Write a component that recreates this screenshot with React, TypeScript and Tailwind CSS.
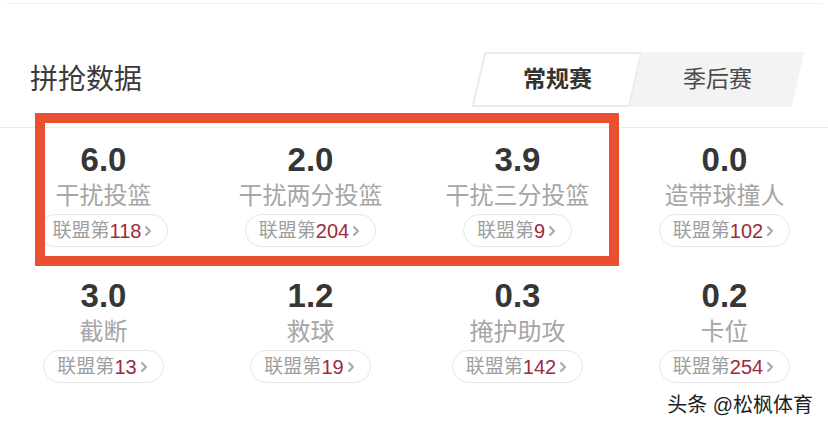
import React from 'react';

interface Stat {
  value: string;
  label: string;
  rank: number;
}

const STATS: Stat[] = [
  { value: '6.0', label: '干扰投篮', rank: 118 },
  { value: '2.0', label: '干扰两分投篮', rank: 204 },
  { value: '3.9', label: '干扰三分投篮', rank: 9 },
  { value: '0.0', label: '造带球撞人', rank: 102 },
  { value: '3.0', label: '截断', rank: 13 },
  { value: '1.2', label: '救球', rank: 19 },
  { value: '0.3', label: '掩护助攻', rank: 142 },
  { value: '0.2', label: '卡位', rank: 254 },
];

const FONT = "font-['Liberation_Sans','Noto_Sans_CJK_SC',sans-serif]";

function Chevron() {
  return (
    <svg width="8" height="12" viewBox="0 0 8 12" className="ml-[3px] mt-[1px]">
      <path d="M2 2l4 4-4 4" fill="none" stroke="#a8a8a8" strokeWidth="2" strokeLinecap="round" strokeLinejoin="round" />
    </svg>
  );
}

function StatCell({ stat }: { stat: Stat }) {
  return (
    <div className="h-[136px] flex flex-col items-center pt-[14px]">
      <div className="text-[33px] leading-[36px] font-bold text-[#363636]">{stat.value}</div>
      <div className="mt-[3px] text-[24px] leading-[30px] text-[#a6a6a6]">{stat.label}</div>
      <div className="mt-[3px] h-[33px] flex items-center rounded-full border border-[#e6e6e6] pl-[13px] pr-[15px] text-[19px] leading-none text-[#9e9e9e]">
        <span>联盟第</span>
        <span className="text-[20px] text-[#9c2b3b]">{stat.rank}</span>
        <Chevron />
      </div>
    </div>
  );
}

export default function App() {
  return (
    <div className={`relative w-[828px] h-[429px] overflow-hidden bg-white ${FONT}`}>
      {/* faint edge of the card above */}
      <div className="mt-[3px] mx-[5px] h-px bg-[#f2f2f2]" />

      {/* Header */}
      <div className="mt-[48px] h-[55px] flex items-center justify-between pl-[30px] pr-[30px]">
        <h2 className="text-[28px] leading-none text-[#3a3a3a] font-normal">拼抢数据</h2>
        <div className="w-[320px] h-full flex -skew-x-[13deg] bg-[#f3f3f3]">
          <div className="w-[158px] h-full flex items-center justify-center bg-white border-2 border-[#ececec]">
            <span className="skew-x-[13deg] text-[23px] font-bold text-[#333]">常规赛</span>
          </div>
          <div className="flex-1 flex items-center justify-center">
            <span className="skew-x-[13deg] text-[23px] text-[#4a4a4a]">季后赛</span>
          </div>
        </div>
      </div>

      <div className="mt-[20px] h-px bg-[#ececec]" />

      {/* Stats grid */}
      <div className="grid grid-cols-4">
        {STATS.map((s) => (
          <StatCell key={s.label} stat={s} />
        ))}
      </div>

      {/* highlight box */}
      <div className="absolute left-[35px] top-[113px] w-[584px] h-[153px] border-[10px] border-[#e8502f]" />

      {/* watermark */}
      <div className="absolute right-[15px] top-[393px] text-[20px] leading-[24px] text-[#1e1e1e] [text-shadow:0_0_2px_#fff,0_0_2px_#fff]">
        头条 @松枫体育
      </div>
    </div>
  );
}
